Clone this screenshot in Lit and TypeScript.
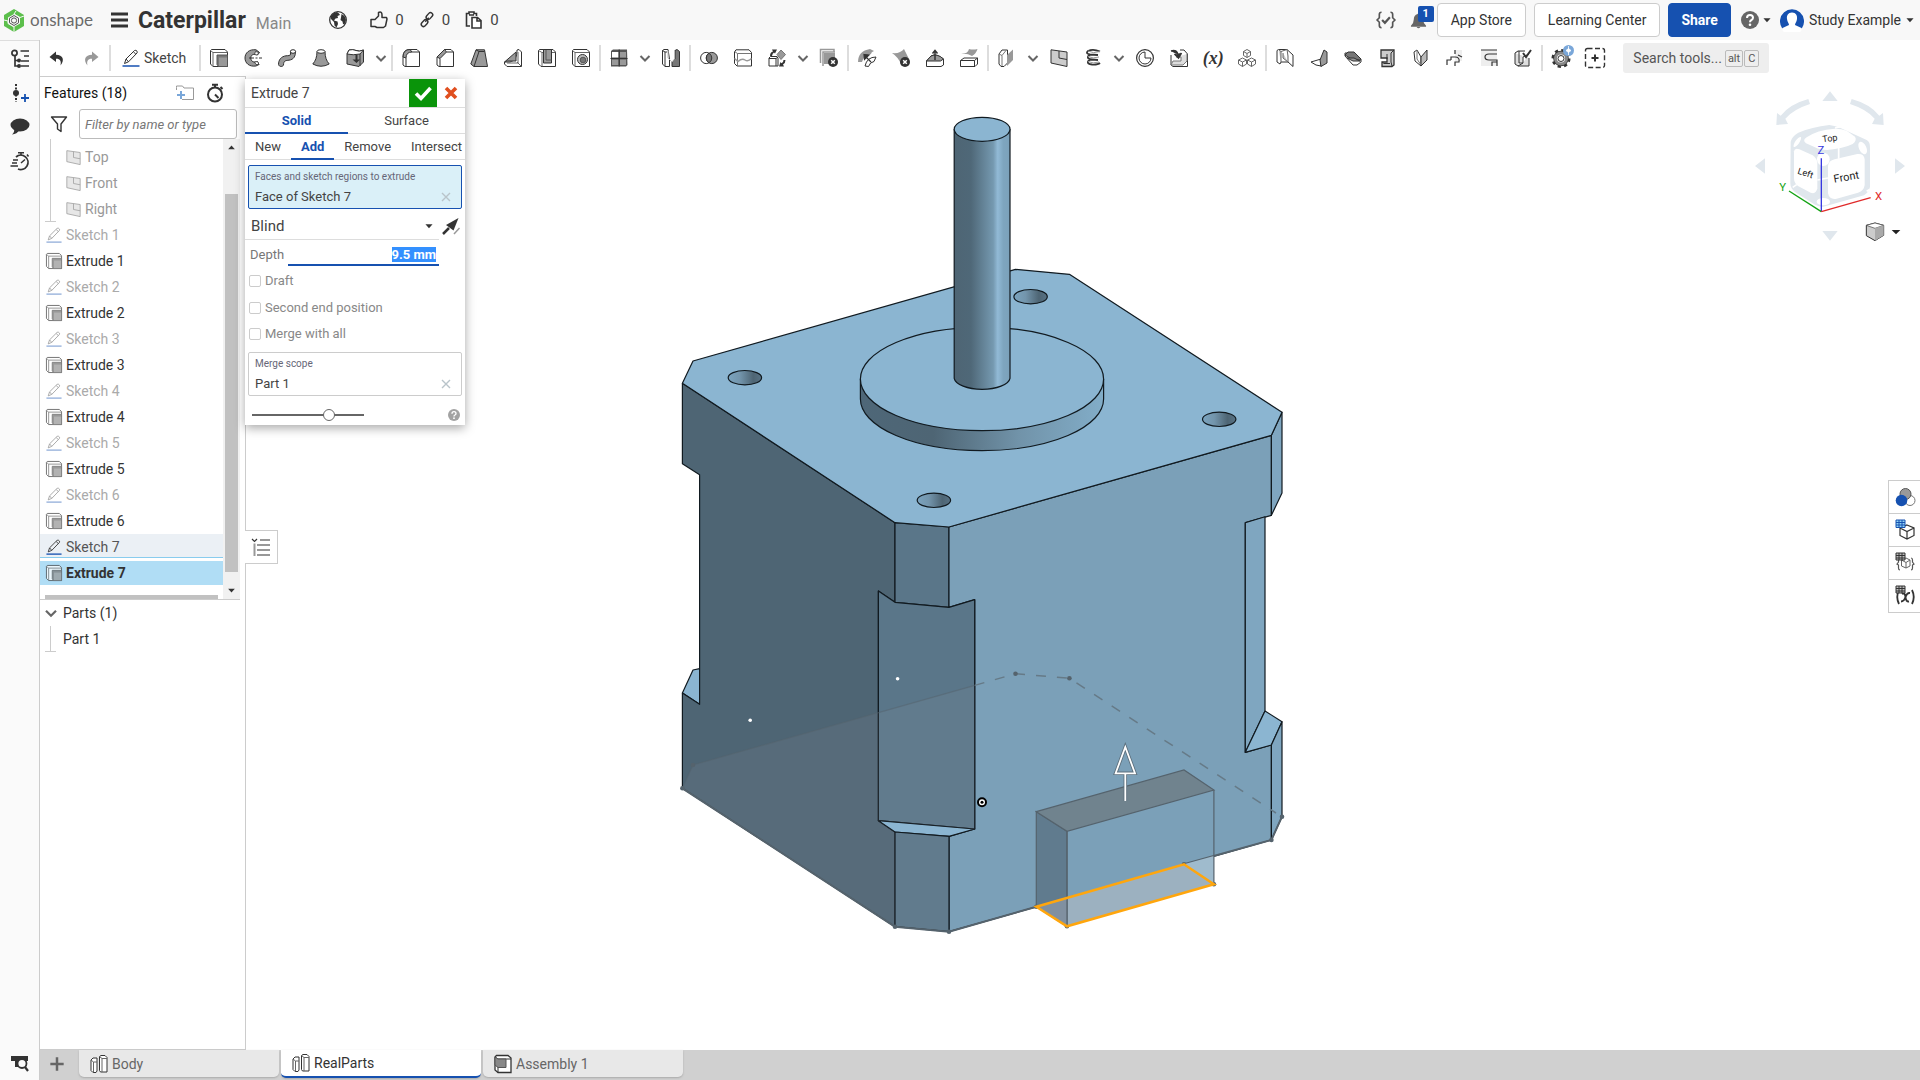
import { LitElement, html, css, svg, nothing } from "lit";
import { customElement } from "lit/decorators.js";
import { classMap } from "lit/directives/class-map.js";

const D = "#333";
const G = "#999";

/* Glyphs are drawn on an 18 x 18 grid. */
const glyphs: Record<string, unknown> = {
  undo: svg`<path d="M8 2.5L1.5 8L8 13V9.8C12 9.6 13.5 12 12.5 16.5C17 11 15 5.8 8 5.8Z" fill="#333"/>`,
  redo: svg`<path d="M10 2.5L16.5 8L10 13V9.8C6 9.6 4.5 12 5.5 16.5C1 11 3 5.8 10 5.8Z" fill="#999"/>`,
  sketch: svg`<g fill="none" stroke=${D}><path d="M2.5 14.5L4 10L12.5 1.5Q14 .8 15 2.2Q15.600 3.200 15 4L6.500 12.800Z M4 10L6.500 12.800 M11.500 3L13.800 5"/></g><path d="M.5 17H17.5" stroke="#1651b0" stroke-width="1.500"/>`,
  extrude: svg`<path d="M.5 1.500L1.500.5H15L17.500 3V17.500H3L.5 15Z" fill="#fff" stroke=${D}/><path d="M.5 1.500L3 3.500H17.500M3 3.500V17.500" fill="none" stroke="#666"/><path d="M7 6H17.500V17.500H8.500L7 15.500Z" fill="#777" stroke="#555"/><path d="M9 8.500H17V17H9Z" fill=${G}/>`,
  revolve: svg`<path d="M12 .8C5 0 1 4 1 9S5 18 12 17L15 15.500L13.500 12.500C10 14 6.800 12.500 6.800 9S10 4.500 13.500 6L15.500 3.500Z" fill=${G} stroke=${D}/><path d="M11.500 2.500L15 3.500L13 6L10.500 5.500ZM10.500 13L13.500 12.500L15 15.500L12 15.500Z" fill="#fff" stroke=${D} stroke-width=".8"/><path d="M5 9H18" stroke=${D} stroke-dasharray="5 1.500 2 1.500"/>`,
  sweep: svg`<path d="M12.500 2V5C12.500 7 10.500 6.500 8 6.800C3 7.500 .5 11 .5 15.500C1 18 5 18 5.500 16C5.500 11.500 8 11.500 11 11.200C16 10.500 17.500 7 17.500 2.500Z" fill=${G} stroke=${D}/><ellipse cx="15" cy="2.500" rx="2.600" ry="1.800" fill="#fff" stroke=${D}/>`,
  loft: svg`<path d="M5 2.500C5 8 3.500 12 .8 15Q9 19.500 17.200 15C14.500 12 13 8 13 2.500Z" fill=${G} stroke=${D}/><ellipse cx="9" cy="2.500" rx="4" ry="1.800" fill="#fff" stroke=${D}/>`,
  thicken: svg`<path d="M1 5L3 1Q7 0 10 1.500T17.500 1V13L13 17.500L1 15Z" fill=${G} stroke=${D}/><path d="M1 5L3 1Q7 0 10 1.500T17.500 1L14 5Q7 6.500 1 5Z" fill="#fff" stroke=${D}/><path d="M14 5V17" stroke=${D}/><path d="M9.500 6V10.500H6.500L10.500 14L14 10.500H11.500V6Z" fill=${D}/>`,
  fillet: svg`<path d="M1 16V8Q1 .5 8 .5H15L17.500 3V17.500H3Z" fill="#fff" stroke=${D}/><path d="M1 8Q1 .5 8 .5L10 3Q4 3 4 9Z" fill=${G} stroke=${D}/><path d="M10 3H17.500M4 9V17" fill="none" stroke=${D}/>`,
  chamfer: svg`<path d="M1 16V8L8.500 .5H15L17.500 3V17.500H3Z" fill="#fff" stroke=${D}/><path d="M1 8L8.500 .5L10.500 3L4 9.500Z" fill=${G} stroke=${D}/><path d="M10.500 3H17.500M4 9.500V17" fill="none" stroke=${D}/>`,
  draft: svg`<path d="M.8 15L6 .8H14.500L17.500 17.500H4Z" fill=${G} stroke=${D}/><path d="M4 17.500L9 2.500L6 .8M9 2.500H14.500" fill="none" stroke=${D}/>`,
  rib: svg`<path d="M13 1L15 .5L17.500 3V17.500H3L.5 15V13H6C11 11.500 13 8 13 1Z" fill="#fff" stroke=${D}/><path d="M.5 13L12 3V12H3Z" fill=${G} stroke=${D}/><path d="M14 3V14H3M17.500 17.500L13 13" fill="none" stroke="#666"/>`,
  shell: svg`<path d="M.5 1.500L1.500.5H15L17.500 3V17.500H3L.5 15Z" fill="#fff" stroke=${D}/><path d="M.5 1.500L4 3.500V17.500M4 3.500H17.500" fill="none" stroke="#666"/><path d="M5.500 .5H13.500V14H5.500Z" fill=${G} stroke=${D}/><path d="M8 1V11H13.500" fill="none" stroke="#555"/>`,
  hole: svg`<path d="M.5 1.500L1.500.5H15L17.500 3V17.500H3L.5 15Z" fill="#fff" stroke=${D}/><path d="M.5 1.500L3 3.500H17.500M3 3.500V17.500" fill="none" stroke="#666"/><circle cx="10.500" cy="10.500" r="5" fill="#bbb" stroke=${D}/><circle cx="11" cy="11" r="2.800" fill="#777" stroke="#555"/>`,
  pattern: svg`<path d="M1 2L3 .5H17L17.500 16L16 17.500H1Z" fill="#555"/><path d="M2 3H8.500V8.500H2Z" fill="#fff"/><path d="M10 3H16V8.500H10ZM2 10.500H8.500V16H2ZM10 10.500H16V16H10Z" fill=${G}/><path d="M.5 9.500H17.500M9.200 .5V17.500" stroke=${D}/>`,
  mirror: svg`<path d="M.5 1.500L2 .5H6L7.500 10V17.500H3L.5 15Z" fill="#fff" stroke=${D}/><path d="M3 17.500V3L.5 1.500M3 3H5" fill="none" stroke=${D}/><path d="M10 17.500V13L13 10V1.500L15 .5L17.500 2.500V17.500Z" fill="#777" stroke=${D}/><path d="M6 2V9L10 13L12.500 10V1" fill="none" stroke="#bbb"/>`,
  boolean: svg`<circle cx="6.200" cy="9" r="5.600" fill="#fff" stroke=${D}/><circle cx="11.800" cy="9" r="5.600" fill=${G} stroke=${D}/><path d="M9 4.200Q6.300 6 6.300 9T9 13.800Q11.800 12 11.800 9T9 4.200Z" fill="#777" stroke=${D}/>`,
  split: svg`<path d="M.5 3L2 .8H15L17.500 3.500V17H3L.5 14.500Z" fill="#fff" stroke=${D}/><path d="M.5 2.500L3.500 4.500H17M3.500 4.500V17" fill="none" stroke="#777"/><path d="M.5 9.500L4 12.500Q8 9 11 11T17.500 9.500" fill="none" stroke=${G} stroke-width="1.500"/>`,
  transform: svg`<path d="M1 9L2.500 7.500H9L10 9V17H1Z" fill="#fff" stroke=${D}/><path d="M1 9.500H8V17M8 9.500L10 8" fill="none" stroke=${D}/><path d="M13 1L17.500 5.500L13 10.500L9 5.500Z" fill=${G} stroke="#777"/><path d="M2 7Q2 3 5 2.500L4 .5H9L7 4.500L6 3.500Q4.500 4 4 7ZM17.500 11Q17.500 14 15 15.500L16 17.500H11L12.500 13L13.500 14.200Q15.500 13.500 15.500 11Z" fill=${D}/>`,
  deletePart: svg`<path d="M.5 14V.5H14V3M3 17V3H15" fill="none" stroke=${G} stroke-width="1.500"/><path d="M4 4H15V15H4Z" fill=${G}/><circle cx="13" cy="13" r="5" fill=${D}/><path d="M11.200 11.200L14.800 14.800M14.800 11.200L11.200 14.800" stroke="#fff" stroke-width="1.500"/>`,
  modifyFillet: svg`<path d="M0 13Q0 2 12 0L16 2Q13 3 13 5Q6 6 4 13Z" fill=${G}/><path d="M7 17Q9 8 18 8L16 12.500Q12 13 10.500 17.500Z" fill="#fff" stroke=${D}/><path d="M6 5.500L11 6L6.500 10.500ZM8 8L13 13" fill=${D} stroke=${D} stroke-width="1.200"/>`,
  deleteFace: svg`<path d="M0 4Q8 5 12 0L17 10L9 15Q6 8 0 4Z" fill=${G}/><circle cx="13" cy="13" r="5" fill=${D}/><path d="M11.200 11.200L14.800 14.800M14.800 11.200L11.200 14.800" stroke="#fff" stroke-width="1.500"/>`,
  moveFace: svg`<path d="M.5 12L5 7Q10 4 17.500 10V16L15 17.500H.5Z" fill="#fff" stroke=${D}/><path d="M.5 12L5 7Q11 4 17.500 10L14.500 12Z" fill=${G} stroke=${D}/><path d="M9 11V2M6.500 4.500L9 1.500L11.500 4.500" fill="none" stroke=${D} stroke-width="1.500"/>`,
  replaceFace: svg`<path d="M1 5Q8 5 9 0Q13 1 17.500 0Q16 5 12 7Q7 4 1 5Z" fill=${G}/><path d="M.5 11.500L4 9H17.500V15L15 17.500H.5Z" fill="#fff" stroke=${D}/><path d="M.5 11.500H14.500V17M14.500 11.500L17.500 9" fill="none" stroke=${D}/>`,
  enclose: svg`<path d="M1 15V5L4 1H9.500V14L6 17.500H3Z" fill="#fff" stroke=${D}/><path d="M1 5L4 6.500V17M4 6.500L8 1.500" fill="none" stroke="#777"/><path d="M9 6L15 .5V11L9 17Z" fill=${G}/>`,
  plane: svg`<path d="M1 .8L17 3V17.500L1 14Z" fill="#ccc" stroke=${D}/><path d="M9 2V9L17 10.500" fill="none" stroke=${D}/>`,
  helix: svg`<path d="M16 2.500Q9 -.5 4 2Q1 4.500 6 5.500L14 6M14 6Q5 5 4 7.500Q3 10 8 10.500L14 11M14 11Q5 10 4 12.500Q3 15 8 15.500Q14 15.800 16 14" fill="none" stroke=${D} stroke-width="1.800"/><path d="M4 2Q9 5 16 2.500M4 7.500Q9 10 15 8M4 12.500Q9 15 15 13" fill="none" stroke=${G}/>`,
  clock: svg`<circle cx="9" cy="9" r="8.400" fill="#fff" stroke=${D} stroke-width="1.200"/><path d="M9 3V9H15A6 6 0 1 1 9 3Z" fill="none" stroke=${D}/>`,
  derived: svg`<path d="M1 6V16L3 17.500H17.500V5L14 1H10" fill="none" stroke=${D}/><path d="M6 8H11V12H3L1 16H13L17 12V5" fill="#ddd" stroke="#777"/><path d="M1 2Q7 0 8 6M4.500 5L8.500 9L11.500 4" fill=${D} stroke=${D} stroke-width="1.500"/>`,
  configure: svg`<g fill="#fff" stroke="#666" stroke-linejoin="round"><path d="M9 .5L12.500 2.500V6.500L9 8.500L5.500 6.500V2.500ZM5.500 2.500L9 4.500L12.500 2.500M9 4.500V8.500"/><path d="M4.500 9L8.500 11V15L4.500 17.500L.5 15V11ZM.5 11L4.500 13L8.500 11M4.500 13V17.500"/><path d="M13.500 9L17.500 11V15L13.500 17.500L9.500 15V11ZM9.500 11L13.500 13L17.500 11M13.500 13V17.500"/></g>`,
  frame: svg`<path d="M1 1.500L2.500 .5H11L17 6V17.500L12 13H5L4 15L1 13Z" fill="#fff" stroke=${D}/><path d="M5 13V2.500L2.500 .5M5 2.500L11 .5M12 13V7L11 .5M7 4V9L12 13" fill="#ccc" stroke="#666"/>`,
  flange: svg`<path d="M1 13L11 10V17L6 16Z" fill="#fff" stroke=${D}/><path d="M10 11L14 1L17 3V14L11 17.500Z" fill=${G} stroke=${D}/>`,
  hem: svg`<path d="M1 4H9L17 11V13L13 16H9L1 7Z" fill="#fff" stroke=${D}/><path d="M1 6L4 3H10L17 10V11H9Z" fill="#777" stroke=${D}/><path d="M3 9H10L16 12H9Z" fill=${G} stroke=${D}/>`,
  tab: svg`<path d="M3 1H16V16L14 17.500H4V13H9V9H3Z" fill="#ccc" stroke=${D} stroke-width="1.300"/><path d="M16 1L13 4V13L14 17M4 13L6 14.500H12M9 10V5" fill="none" stroke=${D}/>`,
  bend: svg`<path d="M2 3L5 1L9 8V17L3 12Z" fill="#fff" stroke=${D}/><path d="M9 8L15 1V11L9 17Z" fill="#bbb" stroke=${D}/><path d="M5 1V10L9 16" fill="none" stroke="#777"/>`,
  relief: svg`<path d="M9 1H16V12H9Z" fill="#eee"/><path d="M1 16V11H5M5 11V8H9M9 8Q14 8 13 13H9V17M9 1V5M16 8L12 6" fill="none" stroke=${D} stroke-width="1.200"/>`,
  corner: svg`<path d="M1 1H17V17H1Z" fill="#eee"/><path d="M17 5H9Q5 5 5 8Q5 11 9 11H17V17M12 17V13H17M1 1H17" fill="none" stroke=${D} stroke-width="1.200"/>`,
  finish: svg`<path d="M1 4L4 2H11M1 4V15L4 17H15V9M5 2V14M5 14H9L4 17M9 14V8L15 5" fill="#ddd" stroke=${D}/><path d="M9 4L12 8L17 1" fill="none" stroke=${D} stroke-width="2"/>`,
  gear: svg`<circle cx="9" cy="9.500" r="8" fill="none" stroke=${D} stroke-width="3" stroke-dasharray="3.200 3.080"/><circle cx="9" cy="9.500" r="5.500" fill="#fff" stroke=${D} stroke-width="4.500"/><circle cx="9" cy="9.500" r="5.500" fill="#fff" stroke="#888" stroke-width="3"/><circle cx="9" cy="9.500" r="3" fill="#fff" stroke=${D}/><circle cx="16.500" cy="1.500" r="5.500" fill="#7aa7d9"/><path d="M16.500 -3V6M14 1.500L16.500 -.5L19 1.500L16.500 3.500Z" stroke="#fff" fill="#fff" stroke-width=".8"/>`,
  addTool: svg`<rect x="-.5" y="-.5" width="19" height="19" rx="2" fill="none" stroke=${D} stroke-width="1.400" stroke-dasharray="5 2.500"/><path d="M9 5.500V12.500M5.500 9H12.500" stroke=${D} stroke-width="2"/>`,
  chevron: svg`<path d="M4.500 7L9 11.500L13.500 7" fill="none" stroke="#666" stroke-width="2"/>`,
  caret: svg`<path d="M5 7H13L9 11.500Z" fill=${D}/>`,
  globe: svg`<circle cx="9" cy="9" r="8.300" fill="#fff" stroke=${D} stroke-width="1.300"/><path d="M2 5Q4 1.500 8 1L10 2.500L11 4L8.500 5L9 7L6.500 7.500L5 9.500L8.500 10.500L9 13L7.500 16.500L5.500 14.500L5 11L2 8ZM12.500 3L15.500 5L17 9L15.500 13.500L14 13L13.500 10.500L11.500 9L12 6.500Z" fill=${D}/>`,
  thumb: svg`<path d="M1 8.500H5L8.500 5V1.500Q12 0 12 4V6.500H16.500L17 8L15.500 15L13.500 16.500H7L5 15.500H1Z" fill="none" stroke=${D} stroke-width="1.500" stroke-linejoin="round"/>`,
  link: svg`<g fill="none" stroke=${D} stroke-width="1.600"><rect x="7.500" y="2" width="8.500" height="5" rx="2.500" transform="rotate(-48 11.750 4.500)"/><rect x="2" y="10" width="8.500" height="5" rx="2.500" transform="rotate(-48 6.250 12.500)"/><path d="M7 11L11 6.500"/></g>`,
  clipboard: svg`<path d="M5 15H1.500V2.500H4V1H9V2.500H11.500V5M4 4H9" fill="none" stroke=${D} stroke-width="1.600"/><path d="M7 6.500H12.500L16 9.500V17H7ZM12 6.500V10H16" fill="#fff" stroke=${D} stroke-width="1.600"/>`,
  braces: svg`<path d="M5 2Q3 2 3 4V7L1 9L3 11V14Q3 16 5 16M13 2Q15 2 15 4V7L17 9L15 11V14Q15 16 13 16" fill="none" stroke="#555" stroke-width="1.500"/><path d="M5.500 9L8 11.500L12.500 6.500" fill="none" stroke="#555" stroke-width="2"/>`,
  bell: svg`<path d="M1 14.500Q4 12 4 8Q4 3 8 2Q9 .5 10 2Q14 3 14 8Q14 12 17 14.500V15.500H1ZM7 16H11Q9 18.500 7 16Z" fill="#666"/>`,
  help: svg`<circle cx="9" cy="9" r="9" fill="#666"/><path d="M6 7Q6 4 9 4T12 6.800Q12 8.300 10.500 9T9 11.200" fill="none" stroke="#fff" stroke-width="2"/><circle cx="9" cy="13.800" r="1.300" fill="#fff"/>`,
  tree: svg`<g fill="none" stroke=${D} stroke-width="1.700"><circle cx="3.500" cy="3" r="2.600"/><path d="M4 6V16H8M4 10.500H8M9.500 1H18M13 6H18M10 11H18M10 16H18" /></g><circle cx="8" cy="10.500" r="2" fill=${D}/><circle cx="8" cy="16" r="2" fill=${D}/>`,
  insert: svg`<path d="M5 0V18" stroke=${D} stroke-width="2" stroke-dasharray="2 1.500"/><circle cx="5" cy="9" r="3" fill=${D}/><path d="M14 10V18M10 14H18" stroke="#1651b0" stroke-width="1.800"/>`,
  comment: svg`<ellipse cx="9" cy="7" rx="9.500" ry="6.500" fill=${D}/><path d="M3 10Q4 14 1 16.500Q6 16 8.500 12Z" fill=${D}/>`,
  timer: svg`<circle cx="9" cy="10.500" r="7" fill="none" stroke=${D} stroke-width="2"/><path d="M6 .8H12M9 .8V3.500M14.500 3L16.500 5M9 10.500L12.500 14" stroke=${D} stroke-width="2"/>`,
  history: svg`<path d="M5 5A7.200 7.200 0 1 1 7 17" fill="none" stroke=${D} stroke-width="1.800"/><path d="M7 .8H13M10 .8V3.500M16 2.500L17.500 4.500M10 11L14 7.500M2 8H7M1 11H6M-.5 14H7" stroke=${D} stroke-width="1.500"/>`,
  inspect: svg`<path d="M0 2H17V7H14Q10 4 7 7V13H4V7H0Z" fill=${D}/><circle cx="11" cy="9.500" r="4.500" fill="#fafafa" stroke=${D} stroke-width="1.800"/><path d="M14 13L17 17" stroke=${D} stroke-width="2.200"/>`,
  folder: svg`<path d="M.5 3.500V2H6.500L8 4H17.500V15.500H6M.5 3.500V6" fill="none" stroke="#999"/><path d="M5 7V15M1 11H9" stroke="#7aa7d9" stroke-width="2"/>`,
  funnel: svg`<path d="M1.500 2H16.500L11 9V16.500L7.500 14V9Z" fill="none" stroke=${D} stroke-width="1.400" stroke-linejoin="round"/>`,
  outline: svg`<path d="M0 1L2.500 3.500L5 1M8 2H18M5 7H18M5 12H18M5 17H18" fill="none" stroke=${D} stroke-width="1.200"/><path d="M2.500 5.500V18" stroke=${G} stroke-width="2"/>`,
  check: svg`<path d="M2 9.500L7 14.500L16.500 4" fill="none" stroke="#fff" stroke-width="3.600"/>`,
  cross: svg`<path d="M4 4L14 14M14 4L4 14" stroke="#e04f1f" stroke-width="3.600"/>`,
  thinCross: svg`<path d="M5 5L13 13M13 5L5 13" stroke="#b9c4ca" stroke-width="1.400"/>`,
  flip: svg`<path d="M1 17L7 11" stroke=${D} stroke-width="2.500"/><path d="M16.500 1L4 8L11.500 13.500Z" fill=${D}/><path d="M17.500 11L12 17" stroke="#999" stroke-width="1.500"/>`,
  plus: svg`<path d="M9 1.500V16.500M1.500 9H16.500" stroke="#666" stroke-width="2.800"/>`,
  studio: svg`<path d="M1 5L3 3H7V16L6 17.500H3L1 15.500ZM9.500 1.500L11 .5H15L17 2.500V17H10.500L9.500 15.500Z" fill="#fff" stroke=${D}/><path d="M1 5L3.500 7V17.500M3.500 7H7M9.500 1.500L12 3.500V17M12 3.500H17" fill="none" stroke="#666"/>`,
  assembly: svg`<path d="M1 2L2.500 .5H14L17 3V17.500H4L1 15Z" fill="#fff" stroke=${D} stroke-width="1.300"/><path d="M1 2L4 4V17.500M4 4H17" fill="none" stroke=${D}/><path d="M1 2L4 4H12V12.500H4L1 10Z" fill="#888" stroke="#555"/>`,
  appearance: svg`<circle cx="14" cy="12.500" r="5" fill="#fff" stroke="#777"/><circle cx="9.500" cy="6" r="5.500" fill=${G} stroke="#555"/><circle cx="5.500" cy="12.500" r="5.800" fill="#1651b0"/>`,
  bom: svg`<path d="M11 4L18 7V14.500L11 18L4 14.500V7ZM4 7L11 10.500L18 7M11 10.500V18" fill="#fff" stroke=${D} stroke-width="1.200"/><path d="M0 -1H9V6.500H0Z" fill="#8fd3f5" stroke="#1651b0"/><path d="M0 1.500H9M0 4H9M3 -1V6M6 -1V6" stroke="#1651b0"/>`,
  variables: svg`<path d="M4 4Q2.500 4 2.500 6V8L1 10L2.500 11V14Q2.500 16 4 16M15 4Q16.500 4 16.500 6V8L18 10L16.500 11V14Q16.500 16 15 16" fill="none" stroke="#555" stroke-width="1.200"/><path d="M10 4L14 6V12L10 14L5.500 12V6ZM5.500 6L10 8.500L14 6M10 8.500V14" fill="#fff" stroke="#666"/><path d="M0 -1H9V6H0Z" fill="#bbb" stroke=${D}/><path d="M0 1.500H9M0 4H9M3 -1V6M6 -1V6" stroke=${D}/>`,
  varTable: svg`<path d="M3 3Q-.5 10 3 17M16 3Q19.500 10 16 17" fill="none" stroke=${D} stroke-width="1.800"/><path d="M6 7Q9 5 9.500 10T13 14.500M14 6Q11 5.500 9.500 10T5 14.500" fill="none" stroke=${D} stroke-width="1.900"/><path d="M0 -1H9V6H0Z" fill="#bbb" stroke=${D}/><path d="M0 1.500H9M0 4H9M3 -1V6M6 -1V6" stroke=${D}/>`,
};

const icon = (name: string, size = 18) => html`<svg
  class="icon" width=${size} height=${size} viewBox="0 0 18 18" aria-hidden="true">${glyphs[name]}</svg>`;

const base = css`
  * { box-sizing: border-box; }
  button, input, select { font: inherit; color: inherit; margin: 0; }
  button { border: 0; padding: 0; background: none; display: flex; align-items: center; justify-content: center; }
  .icon { display: block; flex: none; overflow: visible; }
`;

@customElement("top-bar")
class TopBar extends LitElement {
  static styles = [base, css`
    :host { display: flex; align-items: center; height: 40px; flex: none; padding: 0 2px 0 4px; background: #f8f8f8; }
    .logo { display: flex; align-items: center; gap: 6px; font: 17px/24px Lato, sans-serif; color: #6b6b6b; text-decoration: none; }
    .menu { margin-left: 18px; }
    h1 { margin: 2px 0 0 10px; font-size: 23px; line-height: 24px; font-weight: 700; }
    .branch { margin: 8px 0 0 10px; font-size: 16px; color: #888; }
    .stats { display: flex; gap: 15px; margin-left: 38px; font-size: 15px; color: #444; }
    .stat { display: flex; align-items: center; gap: 7px; }
    .globe { margin-right: 8px; }
    .right { margin-left: auto; display: flex; align-items: center; }
    .bell { position: relative; margin-left: 14px; }
    .badge { position: absolute; left: 8px; top: -6px; width: 16px; height: 16px; border-radius: 2px; background: #1651b0; color: #fff; font-size: 11px; font-weight: 700; line-height: 16px; text-align: center; }
    .box { height: 34px; border: 1px solid #ccc; border-radius: 4px; background: #fff; padding: 0 13px; color: #333; }
    .box.first { margin-left: 10px; }
    .box + .box { margin-left: 8px; }
    .box.share { background: #1651b0; border-color: #1651b0; color: #fff; font-weight: 700; padding: 0 12px; }
    .helper { margin-left: 10px; }
    .user { margin-left: 5px; }
    .name { margin: 0 1px 0 5px; }
  `];
  render() {
    return html`
      <a class="logo" href="#">
        <svg width="20" height="23" viewBox="0 0 20 23" aria-hidden="true">
          <path d="M10 0L20 6V17L10 23L0 17V6Z" fill="#5cbf4c"/>
          <path d="M10 5L16 8.500V14.500L10 18L4 14.500V8.500Z" fill="#f8f8f8"/>
          <path d="M0 11L4 12V14.500L10 18V23M12 2L10 5L16 8.500L20 7" fill="none" stroke="#f8f8f8"/>
          <path d="M10 6.500L14.500 9.200V13.800L10 16.500L5.500 13.800V9.200Z" fill="none" stroke="#555"/>
          <circle cx="10" cy="11.500" r="2.600" fill="none" stroke="#555"/>
        </svg>onshape</a>
      <button class="menu" aria-label="Menu">
        <svg width="17" height="16" viewBox="0 0 17 16"><path d="M0 2H17M0 8H17M0 14H17" stroke="#333" stroke-width="3"/></svg>
      </button>
      <h1>Caterpillar</h1><span class="branch">Main</span>
      <div class="stats">
        <span class="stat globe">${icon("globe")}</span>
        <span class="stat">${icon("thumb")}0</span>
        <span class="stat">${icon("link", 16)}0</span>
        <span class="stat">${icon("clipboard")}0</span>
      </div>
      <div class="right">
        <button aria-label="Checks">${icon("braces", 20)}</button>
        <button class="bell" aria-label="Notifications">${icon("bell", 17)}<span class="badge">1</span></button>
        <button class="box first">App Store</button>
        <button class="box">Learning Center</button>
        <button class="box share">Share</button>
        <button class="helper" aria-label="Help">${icon("help")}${icon("caret", 16)}</button>
        <button class="user">
          <svg width="24" height="24" viewBox="0 0 24 24" aria-hidden="true">
            <path d="M2 20A12 12 0 1 1 22 20L17 23H7Z" fill="#1651b0"/>
            <path d="M12 4.500C16 4.500 17.500 7.500 17 11C16.700 14 15 15 15 17L21.500 20Q22 24 19 24H5Q2 24 2.500 20L9 17C9 15 7.300 14 7 11C6.500 7.500 8 4.500 12 4.500Z" fill="#fff"/>
          </svg><span class="name">Study Example</span>${icon("caret", 16)}
        </button>
      </div>`;
  }
}

@customElement("tool-bar")
class ToolBar extends LitElement {
  static styles = [base, css`
    :host { display: flex; align-items: center; height: 36px; flex: none; background: #fff; }
    .tool { width: 34px; height: 34px; }
    .more { width: 18px; height: 34px; }
    .sep { width: 2px; height: 26px; margin: 0 1px; background: #ddd; }
    .sketch { height: 34px; gap: 4px; padding: 0 12px 0 10px; color: #444; }
    .fx { font: italic 700 18px/20px "Liberation Serif", serif; }
    .search { display: flex; align-items: center; gap: 3px; height: 30px; margin-left: 11px; padding: 0 10px; background: #eee; border-radius: 3px; width: 146px; }
    .search input { flex: 1; min-width: 0; border: 0; padding: 0; background: none; outline: 0; }
    .search input::placeholder { color: #555; opacity: 1; }
    kbd { font: 11px/15px Roboto, sans-serif; color: #555; border: 1px solid #bbb; border-radius: 2px; padding: 0 2px; }
    kbd + kbd { margin-left: -2px; padding: 0 3px; }
  `];
  private tools = "undo redo | SK | extrude revolve sweep loft thicken v | fillet chamfer draft rib shell hole | pattern v mirror | boolean split transform v deletePart | modifyFillet deleteFace moveFace replaceFace | enclose v plane helix v clock derived FX configure | frame flange hem tab bend relief corner finish | gear addTool".split(" ");
  render() {
    return html`
      ${this.tools.map((t) =>
        t === "|" ? html`<span class="sep"></span>`
        : t === "v" ? html`<button class="more" aria-label="More">${icon("chevron", 18)}</button>`
        : t === "SK" ? html`<button class="sketch">${icon("sketch")}Sketch</button>`
        : t === "FX" ? html`<button class="tool fx">(x)</button>`
        : html`<button class="tool" aria-label=${t}>${icon(t)}</button>`)}
      <label class="search"><input aria-label="Search tools" placeholder="Search tools..."><kbd>alt</kbd><kbd>C</kbd></label>`;
  }
}

@customElement("feature-panel")
class FeaturePanel extends LitElement {
  static styles = [base, css`
    :host { display: flex; flex-direction: column; width: 206px; flex: none; background: #fff; border: 1px solid #ccc; border-left: 0; font-size: 14px; }
    .head { display: flex; align-items: center; height: 32px; padding: 0 21px 0 4px; gap: 12px; }
    h2 { margin: 0 auto 0 0; font-size: 14px; font-weight: 400; color: #111; }
    .filter { display: flex; align-items: center; gap: 11px; height: 30px; padding: 0 8px 0 10px; }
    .filter input { flex: 1; min-width: 0; height: 30px; border: 1px solid #bbb; border-radius: 3px; padding: 0 5px; background: #fff; font-size: 13px; font-style: italic; }
    .filter input::placeholder { color: #777; font-style: italic; opacity: 1; }
    .scroller { display: flex; margin-right: 5px; border-bottom: 1px solid #ccc; }
    .list { flex: 1; }
    ul { list-style: none; margin: 0; padding: 0; }
    .planes { position: relative; margin-left: 10px; padding-top: 5px; border-left: 1px solid #ccc; }
    .planes::after, .parts::after { content: ""; position: absolute; left: -6px; bottom: 0; width: 11px; height: 1px; background: #ccc; }
    .row { display: flex; align-items: center; gap: 4px; height: 26px; padding-left: 6px; color: #333; }
    .planes .row { padding-left: 15px; color: #999; }
    .planes .icon, .dim .icon { opacity: .45; }
    .solid .icon, .current .icon { opacity: .75; }
    .dim { color: #aaa; }
    .hover { background: #ebf0f5; border-bottom: 3px solid #fff; box-shadow: inset 0 -1px #88ccee; height: 27px; padding-top: 2px; color: #555; }
    .current { height: 25px; background: #b0ddf5; border-bottom: 1px solid #fff; font-weight: 700; }
    .rollback { height: 4px; margin: 9px 5px 0; background: #c1c1c1; }
    .bar { display: flex; flex-direction: column; align-items: center; width: 17px; background: #f1f1f1; }
    .bar .icon { margin: 1px 0; }
    .up { transform: rotate(180deg); }
    .thumb { flex: 1; width: 13px; margin: 38px 0 10px; background: #c1c1c1; }
    .group { display: flex; align-items: center; gap: 2px; height: 26px; padding-left: 1px; }
    .parts { position: relative; margin-left: 10px; border-left: 1px solid #ccc; }
    .parts .row { padding-left: 12px; }
  `];
  render() {
    const rows: Array<[string, string, string]> = [];
    for (let i = 1; i <= 7; i++) {
      rows.push([`Sketch ${i}`, "sketch", i === 7 ? "hover" : "dim"]);
      rows.push([`Extrude ${i}`, "extrude", i === 7 ? "current" : "solid"]);
    }
    return html`
      <div class="head"><h2>Features (18)</h2>
        <button aria-label="Add folder">${icon("folder")}</button>
        <button aria-label="Regeneration times">${icon("timer")}</button></div>
      <div class="filter">${icon("funnel")}<input aria-label="Filter features" placeholder="Filter by name or type"></div>
      <div class="scroller">
        <div class="list">
          <ul class="planes">${["Top", "Front", "Right"].map((p) => html`<li class="row">${icon("plane", 15)}${p}</li>`)}</ul>
          <ul>${rows.map(([label, glyph, kind]) => html`<li class=${classMap({ row: true, [kind]: true })}>${icon(glyph, 16)}${label}</li>`)}</ul>
          <div class="rollback"></div>
        </div>
        <div class="bar"><span class="up">${icon("caret", 15)}</span><span class="thumb"></span>${icon("caret", 15)}</div>
      </div>
      <div class="group">${icon("chevron", 20)}Parts (1)</div>
      <ul class="parts"><li class="row">Part 1</li></ul>`;
  }
}

@customElement("extrude-dialog")
class ExtrudeDialog extends LitElement {
  static styles = [base, css`
    :host { display: block; width: 220px; background: #fff; box-shadow: 0 3px 10px rgba(0, 0, 0, .35); font-size: 13px; color: #444; }
    .head { display: flex; height: 29px; border-bottom: 1px solid #ddd; }
    h2 { margin: 0 auto 0 0; padding-left: 6px; font-size: 14px; line-height: 28px; font-weight: 400; }
    .ok { width: 28px; height: 28px; background: #0a940a; }
    .cancel { width: 28px; height: 28px; }
    .tabs { display: flex; height: 26px; box-shadow: inset 0 -1px #ddd; }
    .tabs button { padding: 2px 10px 0; border-bottom: 2px solid transparent; }
    .modes { justify-content: space-between; padding-right: 5px; }
    .kind button { flex: 1; }
    .kind button:first-child { flex: none; width: 103px; }
    .tabs .on { color: #1651b0; font-weight: 700; border-bottom-color: #1651b0; }
    .field { margin: 5px 3px 0; height: 44px; border: 1px solid #ccc; border-radius: 2px; padding: 3px 6px 0; display: grid; grid-template-columns: 1fr auto; align-items: center; grid-template-rows: 16px 23px; }
    .field.active { background: #daf0f8; border-color: #1651b0; }
    .field .title { grid-column: 1 / 3; font-size: 10px; color: #667; }
    .type { display: flex; align-items: center; height: 31px; }
    .pick { display: grid; flex: none; width: 194px; height: 31px; padding-top: 3px; align-items: center; border-bottom: 1px solid #ddd; }
    .pick select { grid-area: 1 / 1; appearance: none; border: 0; background: none; padding: 0 6px; font-size: 15px; height: 28px; }
    .pick .icon { grid-area: 1 / 1; justify-self: end; margin-right: 2px; pointer-events: none; }
    .type button { padding: 3px 0 0 3px; }
    .depth { display: flex; align-items: center; gap: 4px; height: 27px; padding: 3px 26px 0 5px; color: #777; }
    .depth input { flex: 1; min-width: 0; height: 22px; border: 0; border-bottom: 2px solid #1651b0; outline: 0; text-align: right; padding: 0 3px; font-weight: 700; }
    .depth input::selection { background: #3390ff; color: #fff; }
    .check { display: flex; align-items: center; gap: 4px; height: 27px; padding-left: 4px; color: #888; }
    .check input { appearance: none; width: 12px; height: 12px; border: 1px solid #ccc; border-radius: 2px; background: #fff; }
    .check:last-of-type { height: 26px; }
    .foot { display: flex; align-items: center; justify-content: space-between; height: 29px; padding: 8px 5px 0 7px; }
    .foot input { appearance: none; width: 112px; height: 12px; background: linear-gradient(#666, #666) center / 100% 2px no-repeat; }
    .foot input::-webkit-slider-thumb { appearance: none; width: 12px; height: 12px; border-radius: 50%; border: 1px solid #666; background: #fff; }
    .foot .icon { opacity: .6; }
  `];
  firstUpdated() {
    const input = this.renderRoot.querySelector<HTMLInputElement>("#depth");
    input?.focus();
    input?.select();
  }
  render() {
    const field = (title: string, value: string, active: boolean) => html`
      <div class=${classMap({ field: true, active })}><span class="title">${title}</span><span>${value}</span>
        <button aria-label="Clear">${icon("thinCross", 18)}</button></div>`;
    return html`
      <div class="head"><h2>Extrude 7</h2>
        <button class="ok" aria-label="Accept">${icon("check")}</button>
        <button class="cancel" aria-label="Cancel">${icon("cross")}</button></div>
      <div class="tabs kind"><button class="on">Solid</button><button>Surface</button></div>
      <div class="tabs modes">${["New", "Add", "Remove", "Intersect"].map((t) => html`<button class=${t === "Add" ? "on" : nothing}>${t}</button>`)}</div>
      ${field("Faces and sketch regions to extrude", "Face of Sketch 7", true)}
      <div class="type">
        <div class="pick"><select aria-label="End type"><option>Blind</option></select>${icon("caret", 16)}</div>
        <button aria-label="Flip direction">${icon("flip")}</button></div>
      <div class="depth"><label for="depth">Depth</label><input id="depth" value="9.5 mm"></div>
      ${["Draft", "Second end position", "Merge with all"].map((t) => html`<label class="check"><input type="checkbox">${t}</label>`)}
      ${field("Merge scope", "Part 1", false)}
      <div class="foot"><input type="range" aria-label="Preview opacity" min="0" max="100" value="71">${icon("help", 12)}</div>`;
  }
}

@customElement("model-view")
class ModelView extends LitElement {
  static styles = css`
    :host { display: block; }
    svg { display: block; }
    .edge { stroke: #111a20; stroke-width: 1.2; stroke-linejoin: round; }
    .soft { stroke: #55636d; stroke-width: 1.2; }
  `;
  render() {
    const holes = [[744.9, 377.7], [1030.6, 296.7], [1219.2, 419.3], [933.9, 500.3]];
    const dots = [[682.4, 788.3], [693, 765], [1015.5, 673.7], [1069.4, 678.3], [1282, 816.7], [1271.4, 840], [949, 931.7], [895, 926.7], [1184, 864.3], [1213.9, 884.3], [1067, 926.3], [1036.3, 906.7]];
    return html`<svg width="640" height="860" viewBox="660 100 640 860" role="img" aria-label="Motor model">
      <defs>
        <linearGradient id="shaft"><stop offset="0" stop-color="#4e6574"/><stop offset=".3" stop-color="#4f6878"/><stop offset=".7" stop-color="#7599b0"/><stop offset=".78" stop-color="#92bad6"/><stop offset=".88" stop-color="#7ea5bf"/><stop offset="1" stop-color="#7ba1ba"/></linearGradient>
        <linearGradient id="disc"><stop offset="0" stop-color="#4e6778"/><stop offset=".3" stop-color="#4e6574"/><stop offset=".65" stop-color="#7193a9"/><stop offset="1" stop-color="#82adc8"/></linearGradient>
        <linearGradient id="bore"><stop offset="0" stop-color="#7ba4bf"/><stop offset=".35" stop-color="#7395ac"/><stop offset=".75" stop-color="#4e6574"/><stop offset="1" stop-color="#587284"/></linearGradient>
      </defs>
      <g class="edge">
        <polygon fill="#8bb5d1" points="693,670 699.6,668.7 699.6,704.3 682.4,693"/>
        <polygon fill="#4e6574" points="682.4,383.3 895,522.7 895,602.3 878.4,591 878.4,820.7 895,832 895,926.7 682.4,788.3 682.4,693 699.6,704.3 699.6,474.7 682.4,463.7"/>
        <polygon fill="#5a7689" points="895,522.7 949,527 949,607.3 895,602.3"/>
        <polygon fill="#7ba0b8" points="949,527 1271.4,435.3 1271.4,515.3 1245.3,522.7 1245.3,752.3 1271.4,745 1271.4,840 949,931.7 949,836.3 974.7,829 974.7,599.7 949,607.3"/>
        <polygon fill="#7fa6c0" points="1271.4,435.3 1282,412.3 1282,493 1271.4,515.3"/>
        <polygon fill="#7fa6c0" points="1245.3,522.7 1265,516.7 1265,711 1245.3,752.3"/>
        <polygon fill="#8bb5d1" points="1265,711 1282,721.7 1271.4,745 1245.3,752.3"/>
        <polygon fill="#7fa6c0" points="1271.4,745 1282,721.7 1282,816.7 1271.4,840"/>
        <polygon fill="#5a7689" points="878.4,591 895,602.3 949,607.3 974.7,599.7 974.7,829 878.4,820.7"/>
        <polygon fill="#8bb5d1" points="878.4,820.7 974.7,829 949,836.3 895,832"/>
        <polygon fill="#617b8d" points="895,832 949,836.3 949,931.7 895,926.7"/>
        <polygon fill="#8bb5d1" points="1015.5,269.3 1069.4,274.3 1282,412.3 1271.4,435.3 949,527 895,522.7 682.4,383.3 693,361"/>
        ${holes.map(([x, y]) => svg`<ellipse cx=${x} cy=${y} rx="16.700" ry="7.200" fill="url(#bore)"/>`)}
        <path d="M860.4 379V399A121.600 51.700 0 0 0 1103.600 399V379Z" fill="url(#disc)"/>
        <ellipse cx="982" cy="379" rx="121.600" ry="51.700" fill="#8bb5d1"/>
        <path d="M954.200 129.300V378.300A28 12 0 0 0 1010 378.300V129.300Z" fill="url(#shaft)"/>
        <ellipse cx="982.100" cy="129.300" rx="27.900" ry="12" fill="#8bb5d1"/>
      </g>
      <polygon fill="#a3a9ad" fill-opacity=".1" points="682.4,788.3 693,765 974.7,685.4 974.7,829 878.4,820.7 895,832 895,926.7"/>
      <g fill="none" class="soft">
        <path d="M682.4 788.3L693 765L974.700 685.400" stroke-opacity=".5"/>
        <path d="M974.700 685.400L1015.500 673.700L1069.400 678.300L1276 813" stroke-dasharray="10 11" stroke="#667a87" stroke-width="1.500"/>
        <path d="M682.4 788.300L895 926.700L949 931.700L1036.300 906.700M1184 864.300L1271.400 840L1282 816.700" stroke-width="2"/>
      </g>
      <g fill="#55636d">${dots.map(([x, y]) => svg`<circle cx=${x} cy=${y} r="2.300"/>`)}</g>
      <g class="soft">
        <polygon fill="#9fbbcd" stroke="none" points="1184,864.3 1213.9,856 1213.9,884.3"/>
        <polygon fill="#9cb1c0" stroke="none" points="1036.3,906.7 1184,864.3 1213.9,884.3 1067,926.3"/>
        <polygon fill="#607b8e" points="1036.3,811.7 1067,831.3 1067,926.3 1036.3,906.7"/>
        <polygon fill="#8090a0" stroke="none" points="1036.3,906.7 1067,898 1067,926.3"/>
        <polygon fill="#70838e" points="1036.3,811.7 1184,770 1213.9,790 1067,831.3"/>
        <path d="M1213.900 790V884.300M1067 831.300V926.300"/>
      </g>
      <polygon fill="none" stroke="#ffa60d" stroke-width="2.500" points="1036.3,906.7 1184,864.3 1213.9,884.3 1067,926.3"/>
      <g fill="none" stroke="#5c6f7c" stroke-width="3.500"><path d="M1125.300 747L1135 773.300H1115.600ZM1125.300 773.300V801"/></g>
      <g fill="none" stroke="#fff" stroke-width="1.800"><path d="M1125.300 747L1135 773.300H1115.600ZM1125.300 773.300V801"/></g>
      <circle cx="982" cy="802.300" r="4" fill="#fff" stroke="#000" stroke-width="2"/><circle cx="982" cy="802.300" r="1.500"/>
      <circle cx="897.600" cy="678.700" r="1.800" fill="#fff"/><circle cx="750.200" cy="720.300" r="1.800" fill="#fff"/>
    </svg>`;
  }
}

@customElement("view-cube")
class ViewCube extends LitElement {
  static styles = [base, css`
    :host { display: block; }
    svg { display: block; }
    .face { font: 33px Roboto, sans-serif; fill: #222; text-anchor: middle; }
    .small { font-size: 27px; }
    .axis { font: 34px Roboto, sans-serif; text-anchor: middle; }
  `];
  render() {
    return html`<svg width="180" height="180" viewBox="0 0 540 540" role="img" aria-label="View cube">
      <g fill="#e0e7ed">
        <path d="M270 34L293 63H247ZM270 482L293 453H247ZM45 258L75 235V281ZM495 258L465 235V281Z"/>
        <path d="M205 57L210 72Q160 88 136 116L144 132L109 135L111 99L122 107Q150 72 205 57ZM335 57L330 72Q380 88 404 116L396 132L431 135L429 99L418 107Q390 72 335 57Z"/>
        <path d="M152 185Q155 170 175 158Q215 141 268 135Q282 137 300 143L380 180Q391 186 390 205V320Q389 334 372 346L250 380Q240 381 225 374L165 336Q151 325 151 310Z"/>
      </g>
      <g fill="#fff">
        <path d="M200 172Q230 150 285 146Q305 146 320 152L345 170Q352 180 338 192Q310 206 262 210Q240 210 225 202L198 190Q186 180 200 172Z"/>
        <path d="M162 214Q164 202 178 208L218 226Q230 234 232 248V325Q228 344 212 338L174 318Q162 308 162 296Z"/>
        <path d="M264 258Q266 242 284 238L352 222Q372 220 374 238V315Q372 332 354 338L290 356Q268 360 264 340Z"/>
        <ellipse cx="250" cy="238" rx="19" ry="20"/><ellipse cx="368" cy="204" rx="11" ry="20" transform="rotate(-25 368 204)"/><ellipse cx="172" cy="186" rx="6" ry="18" transform="rotate(35 172 186)"/><ellipse cx="250" cy="365" rx="20" ry="11"/>
      </g>
      <path d="M296 202V236M232 300L264 294M285 144L302 140M380 334L390 328M158 322L170 314" stroke="#fff" stroke-width="5"/>
      <text class="face" x="319" y="302" transform="rotate(-10 319 292)">Front</text>
      <text class="face small" x="196" y="288" transform="rotate(18 196 280)">Left</text>
      <text class="face small" x="270" y="184" transform="rotate(-8 270 177)">Top</text>
      <path d="M244 395V235" stroke="#3838e0" stroke-width="4"/>
      <path d="M244 395L147 333" stroke="#12a312" stroke-width="4"/>
      <path d="M244 395L392 353" stroke="#e02a2a" stroke-width="4"/>
      <text class="axis" x="243" y="221" fill="#3838e0">Z</text><text class="axis" x="128" y="334" fill="#12a312">Y</text><text class="axis" x="416" y="359" fill="#e02a2a">X</text>
      <g stroke-linejoin="round"><path d="M405 429L431 436V466L405 482L379 467V436Z" fill="#ccc" stroke="#333" stroke-width="3"/><path d="M405 429L431 436L405 445L379 436Z" fill="#fff" stroke="#444" stroke-width="2"/><path d="M405 445L431 436V466L405 482Z" fill="#aaa"/></g>
      <path d="M455 450H481L468 463Z" fill="#222"/>
    </svg>`;
  }
}

@customElement("app-root")
class AppRoot extends LitElement {
  static styles = [base, css`
    :host { display: flex; flex-direction: column; height: 100vh; overflow: hidden; background: #fff; color: #333; font-family: Roboto, "Noto Sans", sans-serif; font-size: 14px; line-height: 18px; }
    .body { display: flex; flex: 1; min-height: 0; }
    .rail { display: flex; flex-direction: column; width: 40px; flex: none; background: #fafafa; border-right: 1px solid #ccc; }
    .rail button { height: 34px; }
    .rail button:first-child { height: 36px; border-top: 1px solid #ddd; }
    .rail .last { margin-top: auto; }
    .main { display: flex; flex-direction: column; flex: 1; min-width: 0; }
    .work { display: flex; flex: 1; min-height: 0; }
    .canvas { position: relative; flex: 1; min-width: 0; }
    extrude-dialog { position: absolute; left: -1px; top: 3px; }
    model-view { position: absolute; left: calc(50% - 423px); top: 24px; }
    view-cube { position: absolute; right: 0; top: 4px; }
    .outline { position: absolute; left: -1px; top: 454px; width: 33px; height: 34px; background: #fff; border: 1px solid #ccc; border-left: 0; }
    .side { position: absolute; right: 0; top: 404px; display: flex; flex-direction: column; border: 1px solid #ccc; border-width: 1px 0 0 1px; background: #fff; }
    .side button { width: 31px; height: 33px; border-bottom: 1px solid #ccc; }
    .sheets { display: flex; height: 30px; flex: none; background: #d0d0d0; padding-left: 6px; gap: 2px; }
    .add { width: 21px; height: 28px; margin-right: 10px; }
    .sheet { justify-content: flex-start; gap: 4px; width: 200px; height: 27px; padding: 0 11px; background: #e8e8e8; color: #666; border-radius: 0 0 5px 5px; box-shadow: 0 1px 2px #aaa; }
    .sheet.on { height: 28px; background: #fff; color: #333; border-bottom: 2px solid #1651b0; }
  `];
  render() {
    return html`
      <top-bar></top-bar>
      <div class="body">
        <nav class="rail">
          ${["tree", "insert", "comment", "history"].map((g) => html`<button aria-label=${g}>${icon(g)}</button>`)}
          <button class="last" aria-label="inspect">${icon("inspect")}</button>
        </nav>
        <div class="main">
          <tool-bar></tool-bar>
          <div class="work">
            <feature-panel></feature-panel>
            <div class="canvas">
              <model-view></model-view>
              <view-cube></view-cube>
              <button class="outline" aria-label="Feature list">${icon("outline")}</button>
              <div class="side">${["appearance", "bom", "variables", "varTable"].map((g) => html`<button aria-label=${g}>${icon(g)}</button>`)}</div>
              <extrude-dialog></extrude-dialog>
            </div>
          </div>
          <div class="sheets">
            <button class="add" aria-label="Add tab">${icon("plus", 16)}</button>
            <button class="sheet">${icon("studio")}Body</button>
            <button class="sheet on">${icon("studio")}RealParts</button>
            <button class="sheet">${icon("assembly")}Assembly 1</button>
          </div>
        </div>
      </div>`;
  }
}
